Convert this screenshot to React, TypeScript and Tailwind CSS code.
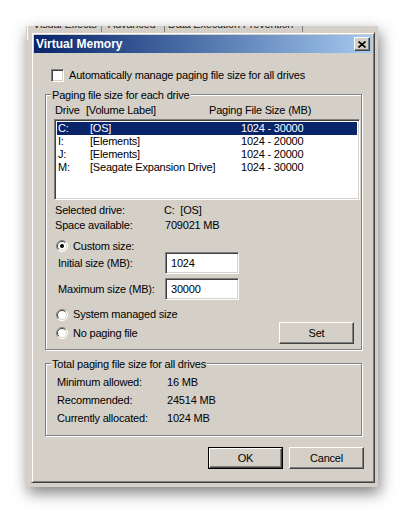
import React from "react";

const raised =
  "border border-t-white border-l-white border-r-[#404040] border-b-[#404040] shadow-[inset_-1px_-1px_0_#808080] bg-[#d4d0c8]";
const sunken =
  "border border-t-[#808080] border-l-[#808080] border-r-white border-b-white shadow-[inset_1px_1px_0_#404040,inset_-1px_-1px_0_#d4d0c8]";
const etched = "relative border border-[#808080] shadow-[inset_1px_1px_0_#fff,1px_1px_0_#fff]";

const drives = [
  { letter: "C:", label: "[OS]", size: "1024 - 30000", selected: true },
  { letter: "I:", label: "[Elements]", size: "1024 - 20000" },
  { letter: "J:", label: "[Elements]", size: "1024 - 20000" },
  { letter: "M:", label: "[Seagate Expansion Drive]", size: "1024 - 30000" },
];

function Radio({ checked }: { checked?: boolean }) {
  return (
    <svg width="12" height="12" viewBox="0 0 12 12" className="shrink-0">
      <circle cx="6" cy="6" r="5.5" fill="#fff" />
      <path d="M2.1 9.9 A5.5 5.5 0 0 1 9.9 2.1" stroke="#808080" fill="none" />
      <path d="M9.9 2.1 A5.5 5.5 0 0 1 2.1 9.9" stroke="#fff" fill="none" />
      <path d="M2.8 9.2 A4.5 4.5 0 0 1 9.2 2.8" stroke="#404040" fill="none" />
      <path d="M9.2 2.8 A4.5 4.5 0 0 1 2.8 9.2" stroke="#d4d0c8" fill="none" />
      {checked && <circle cx="6" cy="6" r="2" fill="#000" />}
    </svg>
  );
}

function Button({ label, isDefault }: { label: string; isDefault?: boolean }) {
  const inner = (
    <div className={`${raised} w-full h-full flex items-center justify-center`}>{label}</div>
  );
  if (isDefault) {
    return <div className="w-[75px] h-[22px] border border-black">{inner}</div>;
  }
  return <div className="w-[75px] h-[22px]">{inner}</div>;
}

function Group({ title, className, children }: { title: string; className?: string; children: React.ReactNode }) {
  return (
    <div className={`${etched} ${className ?? ""}`}>
      <span className="absolute left-[5px] top-[-6px] px-[1px] bg-[#d4d0c8] leading-[13px]">{title}</span>
      {children}
    </div>
  );
}

// the property sheet behind: only the bottoms of its tab labels peek out
function TabStrip() {
  return (
    <div className="flex h-[6px] overflow-hidden ml-[1px] text-[#222]">
      <div className="w-px bg-white" />
      <div className="w-[73px] pl-[5px]">
        <div className="-mt-[8px] whitespace-nowrap">Visual Effects</div>
      </div>
      <div className="w-px bg-[#808080]" />
      <div className="w-[62px] pl-[6px]">
        <div className="-mt-[8px] whitespace-nowrap">Advanced</div>
      </div>
      <div className="w-px bg-[#808080]" />
      <div className="w-[137px] pl-[3px]">
        <div className="-mt-[8px] whitespace-nowrap">Data Execution Prevention</div>
      </div>
      <div className="w-px bg-[#808080]" />
    </div>
  );
}

export default function App() {
  return (
    <div className="w-[406px] h-[513px] bg-white pl-[26px] pt-[26px] font-['Liberation_Sans',Arial,sans-serif] text-[11px] leading-[13px] text-black tracking-[-0.2px]">
      <div className="relative w-[352px] h-[461px] bg-[#d4d0c8] shadow-[2px_6px_14px_rgba(0,0,0,0.5)]">
        <div className="absolute left-[1px] top-0 w-px h-[14px] bg-white" />
        <TabStrip />

        {/* Virtual Memory dialog */}
        <div className="ml-[5px] w-[344px] h-[451px] bg-[#d4d0c8] border border-t-[#d4d0c8] border-l-[#d4d0c8] border-r-[#404040] border-b-[#404040] shadow-[inset_1px_1px_0_#fff,inset_-1px_-1px_0_#808080] p-[2px] flex flex-col">
          <div className="h-[18px] bg-linear-to-r from-[#0a246a] to-[#a6caf0] flex items-center justify-between pl-[2px] pr-[2px]">
            <span className="text-white font-bold text-[12px] tracking-normal">Virtual Memory</span>
            <div className={`${raised} w-[16px] h-[14px] flex items-center justify-center`}>
              <svg width="8" height="7" viewBox="0 0 8 7">
                <path d="M0.5 0.5L7.5 6.5M7.5 0.5L0.5 6.5" stroke="#000" strokeWidth="1.6" />
              </svg>
            </div>
          </div>

          <div className="mt-[16px] ml-[17px] flex items-center h-[13px] gap-[5px]">
            <div className={`${sunken} w-[13px] h-[13px] bg-white`} />
            <span>Automatically manage paging file size for all drives</span>
          </div>

          <Group title="Paging file size for each drive" className="mt-[12px] ml-[11px] w-[317px] pt-[9px] pb-[5px]">
            <div className="flex pl-[9px]">
              <span className="w-[31px]">Drive</span>
              <span className="w-[123px]">[Volume Label]</span>
              <span>Paging File Size (MB)</span>
            </div>
            <div className={`${sunken} mt-[2px] ml-[8px] w-[306px] h-[81px] bg-white p-[2px]`}>
              {drives.map((d) => (
                <div
                  key={d.letter}
                  className={`flex h-[13px] pl-[1px] ${d.selected ? "bg-[#0a246a] text-white" : ""}`}
                >
                  <span className="w-[32px]">{d.letter}</span>
                  <span className="w-[151px]">{d.label}</span>
                  <span>{d.size}</span>
                </div>
              ))}
            </div>

            <div className="mt-[4px] pl-[9px] flex flex-col gap-[2px]">
              <div className="flex">
                <span className="w-[109px]">Selected drive:</span>
                <span>C:&nbsp; [OS]</span>
              </div>
              <div className="flex">
                <span className="w-[110px]">Space available:</span>
                <span>709021 MB</span>
              </div>
            </div>

            <div className="mt-[8px] pl-[10px] h-[12px] flex items-center gap-[5px]">
              <Radio checked />
              <span>Custom size:</span>
            </div>

            <div className="pl-[12px] h-[22px] flex items-center">
              <span className="w-[107px]">Initial size (MB):</span>
              <div className={`${sunken} w-[74px] h-[22px] bg-white pl-[5px] flex items-center`}>1024</div>
            </div>
            <div className="mt-[4px] pl-[12px] h-[22px] flex items-center">
              <span className="w-[107px]">Maximum size (MB):</span>
              <div className={`${sunken} w-[74px] h-[22px] bg-white pl-[5px] flex items-center`}>30000</div>
            </div>

            <div className="mt-[8px] pl-[10px] h-[13px] flex items-center gap-[5px]">
              <Radio />
              <span>System managed size</span>
            </div>
            <div className="mt-[1px] pl-[10px] pr-[7px] h-[22px] flex items-center justify-between">
              <div className="flex items-center gap-[5px]">
                <Radio />
                <span>No paging file</span>
              </div>
              <Button label="Set" />
            </div>
          </Group>

          <Group title="Total paging file size for all drives" className="mt-[13px] ml-[11px] w-[317px] pt-[12px] pb-[10px]">
            <div className="pl-[11px] flex flex-col gap-[5px]">
              <div className="flex">
                <span className="w-[110px]">Minimum allowed:</span>
                <span>16 MB</span>
              </div>
              <div className="flex">
                <span className="w-[110px]">Recommended:</span>
                <span>24514 MB</span>
              </div>
              <div className="flex">
                <span className="w-[110px]">Currently allocated:</span>
                <span>1024 MB</span>
              </div>
            </div>
          </Group>

          <div className="mt-[11px] pr-[8px] flex justify-end gap-[6px]">
            <Button label="OK" isDefault />
            <Button label="Cancel" />
          </div>
        </div>
      </div>
    </div>
  );
}
